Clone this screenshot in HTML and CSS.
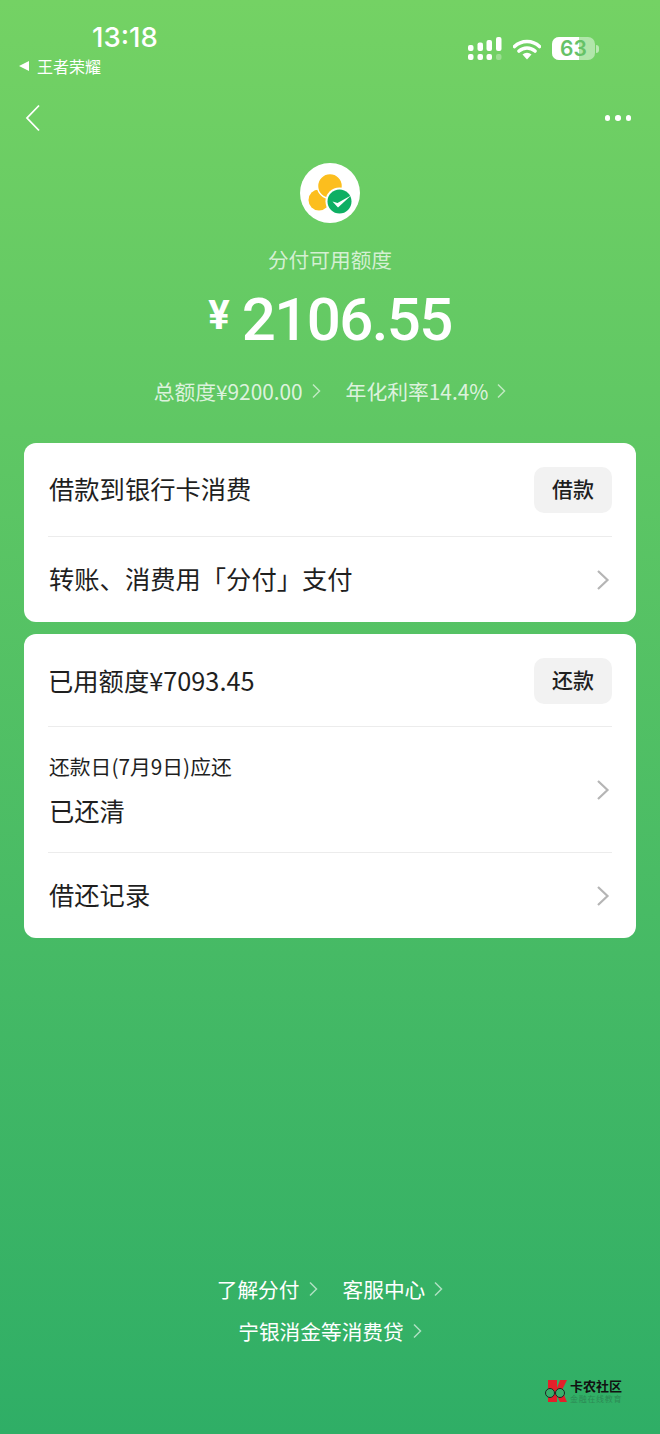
FILE: index.html
```html
<!DOCTYPE html>
<html lang="zh-CN">
<head>
<meta charset="utf-8">
<title>分付</title>
<link rel="stylesheet" href="styles.css">
</head>
<body>
<main class="page">
  <header class="status">
    <div class="status-left">
      <div class="time">13:18</div>
      <div class="backapp"><span class="tri"></span>王者荣耀</div>
    </div>
    <div class="status-right">
      <svg class="signal" width="34" height="24" viewBox="0 0 34 24">
        <g fill="#fff">
          <rect x="0" y="8" width="5.5" height="6" rx="2"/><rect x="9.5" y="5.5" width="5.5" height="8.5" rx="2"/><rect x="18.5" y="3" width="5.5" height="11" rx="2"/><rect x="28" y="0" width="5.5" height="14" rx="2"/>
          <rect x="0" y="17" width="5.5" height="6" rx="2"/><rect x="9.5" y="17" width="5.5" height="6" rx="2"/><rect x="18.5" y="17" width="5.5" height="6" rx="2"/><rect x="28" y="17" width="5.5" height="6" rx="2" opacity=".3"/>
        </g>
      </svg>
      <svg class="wifi" width="28" height="22" viewBox="0 0 28 22">
        <path d="M1.5 8.5a18 18 0 0 1 25 0M6 13a12 12 0 0 1 16 0" fill="none" stroke="#fff" stroke-width="3.6" stroke-linecap="round"/>
        <path d="M9.5 16.5a7 7 0 0 1 9 0L14 21.5z" fill="#fff"/>
      </svg>
      <div class="battery"><span class="battery-fill"></span><span class="battery-num">63</span></div>
      <span class="battery-tip"></span>
    </div>
  </header>

  <nav class="nav">
    <svg width="16" height="28" viewBox="0 0 16 28"><path d="M14 1.500 2 14l12 12.500" fill="none" stroke="#fff" stroke-width="1.800"/></svg>
    <div class="dots"><i></i><i></i><i></i></div>
  </nav>

  <section class="hero">
    <svg class="logo" width="60" height="60" viewBox="0 0 60 60">
      <circle cx="30" cy="30" r="30" fill="#fff"/>
      <circle cx="19" cy="37" r="10.500" fill="#fcbe1e"/>
      <circle cx="30" cy="23" r="12.500" fill="#fcbe1e" stroke="#fff" stroke-width="1.500"/>
      <circle cx="39.500" cy="38.500" r="14" fill="#fff"/>
      <circle cx="39.500" cy="38.500" r="12" fill="#0eaf63"/>
      <path d="M32.500 38.500l5 1.500L51 32.500 38 44.500z" fill="#fff"/>
    </svg>
    <div class="label">分付可用额度</div>
    <div class="amount"><span class="yen">¥</span><span class="num">2106.55</span></div>
    <div class="stats">
      <span class="stat">总额度¥9200.00<svg class="chev-sm" width="9" height="16" viewBox="0 0 9 16"><path d="M1 1.500 7.500 8 1 14.500"/></svg></span>
      <span class="stat">年化利率14.4%<svg class="chev-sm" width="9" height="16" viewBox="0 0 9 16"><path d="M1 1.500 7.500 8 1 14.500"/></svg></span>
    </div>
  </section>

  <section class="cards">
    <div class="card">
      <div class="row row-a"><span class="title">借款到银行卡消费</span><span class="btn">借款</span></div>
      <div class="row row-b"><span class="title">转账、消费用「分付」支付</span><svg class="chev" width="14" height="22" viewBox="0 0 14 22"><path d="M2 2l9.500 9L2 20"/></svg></div>
    </div>
    <div class="card">
      <div class="row row-c"><span class="used">已用额度¥7093.45</span><span class="btn">还款</span></div>
      <div class="row row-d">
        <div class="stack"><div class="sub">还款日(7月9日)应还</div><div>已还清</div></div>
        <svg class="chev" width="14" height="22" viewBox="0 0 14 22"><path d="M2 2l9.500 9L2 20"/></svg>
      </div>
      <div class="row row-b"><span class="title">借还记录</span><svg class="chev" width="14" height="22" viewBox="0 0 14 22"><path d="M2 2l9.500 9L2 20"/></svg></div>
    </div>
  </section>

  <footer class="links">
    <div class="link-line">
      <span class="flink">了解分付<svg class="chev-sm" width="9" height="16" viewBox="0 0 9 16"><path d="M1 1.500 7.500 8 1 14.500"/></svg></span>
      <span class="flink">客服中心<svg class="chev-sm" width="9" height="16" viewBox="0 0 9 16"><path d="M1 1.500 7.500 8 1 14.500"/></svg></span>
    </div>
    <div class="link-line">
      <span class="flink">宁银消金等消费贷<svg class="chev-sm" width="9" height="16" viewBox="0 0 9 16"><path d="M1 1.500 7.500 8 1 14.500"/></svg></span>
    </div>
  </footer>

  <div class="mark">
    <svg width="24" height="26" viewBox="0 0 24 26">
      <path d="M4 2h9v8l3-8h7l-5 10 5 12h-7l-3-6v6H4z" fill="#e3202a"/>
      <circle cx="6" cy="15" r="4.500" fill="#37b06a" stroke="#222" stroke-width="1"/>
      <circle cx="16" cy="15" r="4.500" fill="#37b06a" stroke="#222" stroke-width="1"/>
    </svg>
    <div class="mark-text"><div class="mark-title">卡农社区</div><div class="mark-sub">金融在线教育</div></div>
  </div>
</main>
</body>
</html>
```
FILE: styles.css
```css
* { box-sizing: border-box; }
html, body { margin: 0; padding: 0; }
body {
  font-family: "Noto Sans CJK SC", "Noto Sans", sans-serif;
  color: #1f1f1f;
}
.page {
  position: relative;
  width: 660px;
  height: 1434px;
  overflow: hidden;
  background: linear-gradient(180deg, #74d264 0%, #5fc764 30%, #2fae66 100%);
}
.status {
  height: 100px;
  display: flex;
  justify-content: space-between;
  padding: 20px 61px 0 19px;
  color: #fff;
}
.status-left { display: flex; flex-direction: column; }
.time {
  font-family: "Inter", sans-serif;
  font-size: 27.500px;
  font-weight: 500;
  line-height: 34px;
  margin-left: 73px;
}
.backapp {
  display: flex;
  align-items: center;
  font-size: 16px;
  line-height: 24px;
}
.tri {
  width: 0;
  height: 0;
  margin-right: 8px;
  border-style: solid;
  border-width: 5.500px 10px 5.500px 0;
  border-color: transparent #fff transparent transparent;
}
.status-right { display: flex; align-items: flex-start; padding-top: 17px; }
.wifi { margin-left: 11px; margin-top: 1px; }
.battery {
  position: relative;
  width: 43px;
  height: 23px;
  margin-left: 11px;
  border-radius: 7px;
  overflow: hidden;
  background: rgba(255, 255, 255, .45);
}
.battery-fill {
  position: absolute;
  left: 0;
  top: 0;
  bottom: 0;
  width: 27px;
  background: #fff;
}
.battery-num {
  position: relative;
  display: block;
  text-align: center;
  font-family: "Inter", sans-serif;
  font-size: 21px;
  font-weight: 600;
  line-height: 23px;
  color: #66c267;
}
.battery-tip {
  width: 3px;
  height: 8px;
  margin: 8px 0 0 1px;
  border-radius: 0 3px 3px 0;
  background: rgba(255, 255, 255, .5);
}
.nav {
  height: 36px;
  display: flex;
  justify-content: space-between;
  align-items: center;
  padding: 0 29px 0 25px;
}
.dots { display: flex; gap: 4.800px; }
.dots i { width: 5.500px; height: 5.500px; border-radius: 50%; background: #fff; }
.hero {
  display: flex;
  flex-direction: column;
  align-items: center;
  padding-top: 27px;
  color: #fff;
}
.logo { display: block; }
.label {
  margin-top: 20px;
  font-size: 20.700px;
  line-height: 32px;
  color: rgba(255, 255, 255, .72);
}
.amount {
  display: flex;
  align-items: flex-start;
  margin-top: 6px;
  height: 79px;
}
.yen {
  font-family: "Roboto", sans-serif;
  font-size: 40px;
  font-weight: 700;
  line-height: 70px;
  margin-right: 12px;
}
.num {
  font-family: "Roboto", sans-serif;
  font-size: 60px;
  font-weight: 500;
  line-height: 78px;
  letter-spacing: -1.600px;
}
.stats {
  display: flex;
  gap: 25px;
  margin-top: 15px;
  font-size: 20.800px;
  line-height: 32px;
  color: rgba(255, 255, 255, .8);
}
.stat, .flink { display: inline-flex; align-items: center; }
.chev-sm { margin-left: 9px; }
.chev-sm path { fill: none; stroke: rgba(255, 255, 255, .6); stroke-width: 1.500; }
.cards {
  display: flex;
  flex-direction: column;
  gap: 12px;
  margin: 36px 24px 0;
}
.card {
  background: #fff;
  border-radius: 12px;
  padding: 0 24px;
}
.row {
  display: flex;
  justify-content: space-between;
  align-items: center;
  font-size: 25.300px;
  line-height: 36px;
  border-bottom: 1px solid #ececec;
}
.row:last-child { border-bottom: 0; }
.row-a { height: 94px; }
.row-b { height: 85px; }
.row-c { height: 93px; }
.row-d { height: 126px; }
.title { margin: -3px 0 0 1px; }
.used { margin-top: -1px; }
.btn {
  width: 78px;
  height: 46px;
  border-radius: 10px;
  background: #f2f2f2;
  text-align: center;
  font-size: 21px;
  font-weight: 500;
  line-height: 43px;
}
.row-c .btn { margin-top: 1px; }
.chev { margin-right: 2px; }
.chev path { fill: none; stroke: #b5b5b5; stroke-width: 2.200; }
.stack { display: flex; flex-direction: column; gap: 10px; margin: -2px 0 0 1px; }
.sub { font-size: 20.800px; line-height: 32px; }
.links {
  position: absolute;
  left: 0;
  right: 0;
  top: 1273px;
  display: flex;
  flex-direction: column;
  gap: 10px;
  color: #fff;
  font-size: 20.700px;
  line-height: 32px;
}
.link-line { display: flex; justify-content: center; gap: 25px; }
.mark {
  position: absolute;
  left: 544px;
  top: 1378px;
  display: flex;
  gap: 2px;
  align-items: center;
}
.mark-title {
  font-size: 13px;
  font-weight: 700;
  line-height: 13px;
  color: #111;
}
.mark-sub {
  margin-top: 2px;
  font-size: 8px;
  line-height: 9px;
  letter-spacing: .7px;
  white-space: nowrap;
  color: #2d8a55;
}
```
